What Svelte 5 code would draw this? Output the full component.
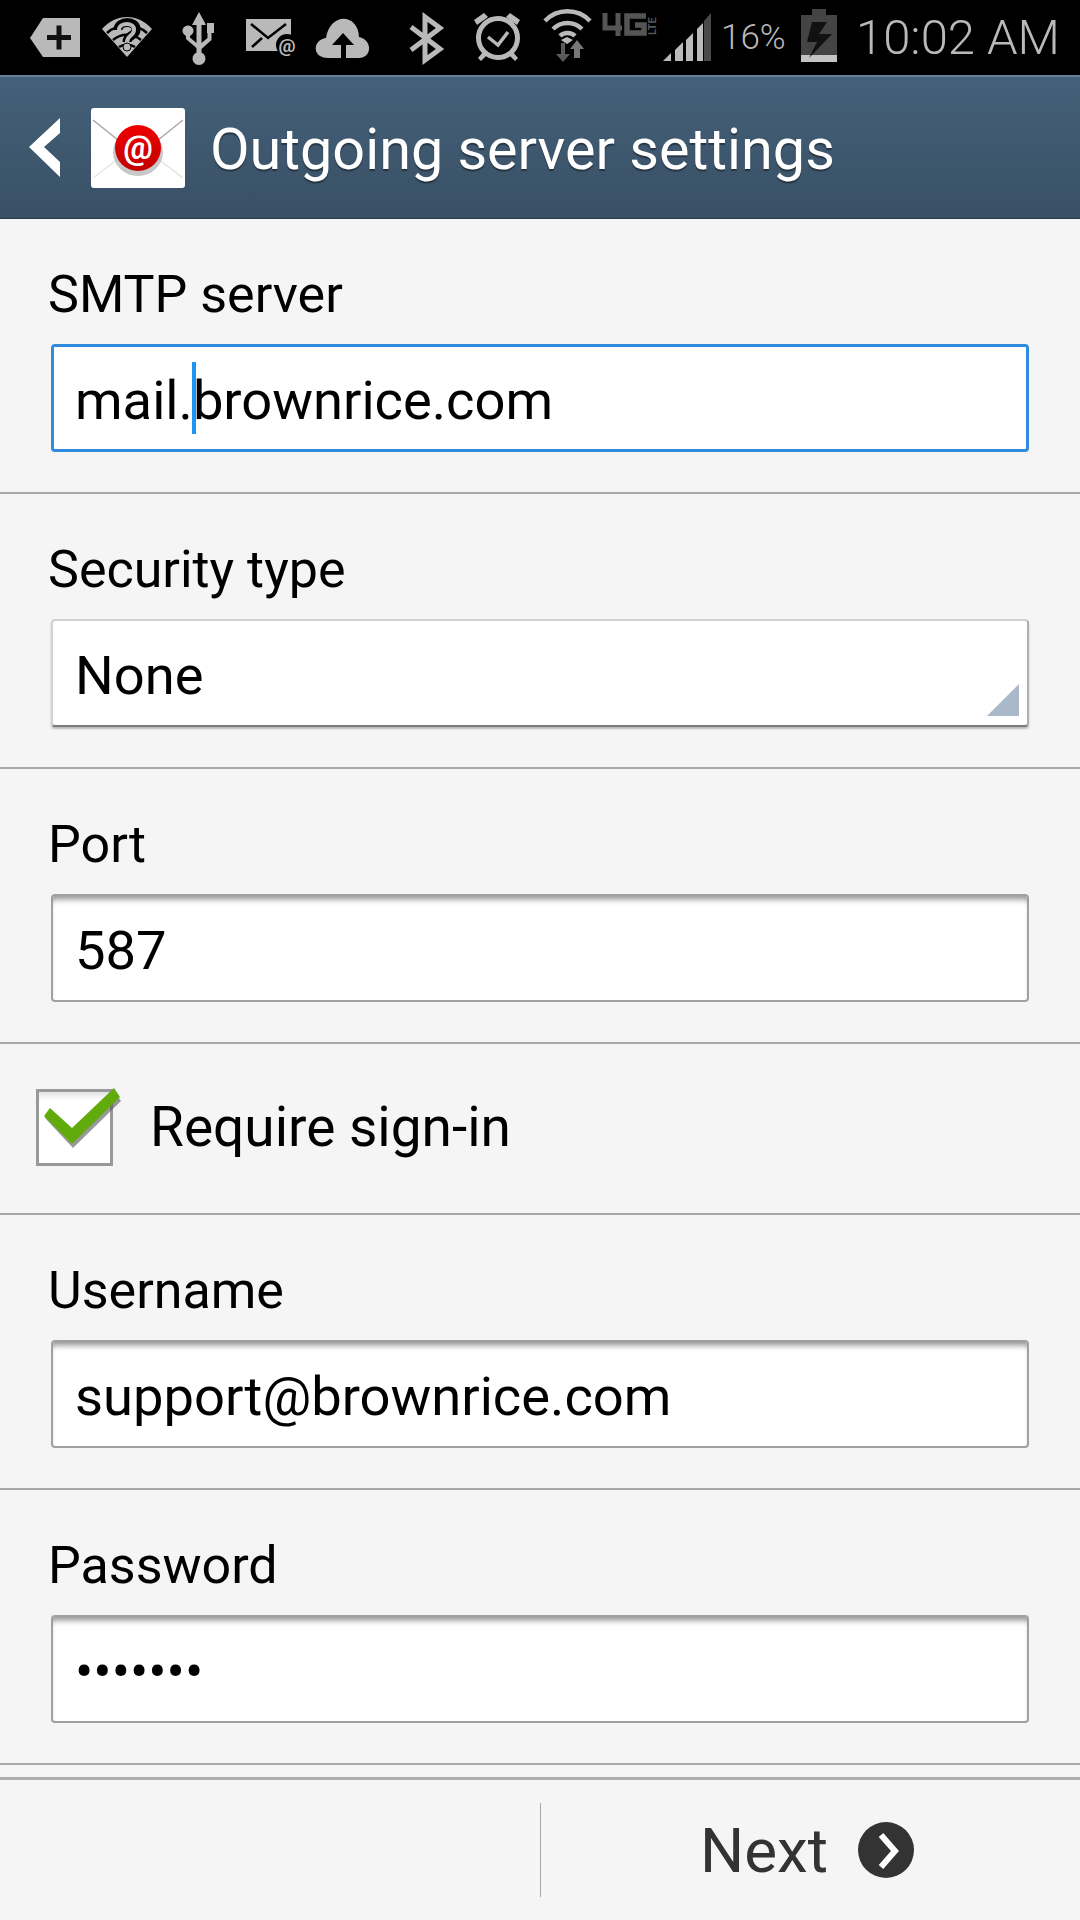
<script>
  const fields = [
    { label: 'SMTP server', value: 'mail.brownrice.com', kind: 'focus' },
    { label: 'Security type', value: 'None', kind: 'select' },
    { label: 'Port', value: '587', kind: 'plain' }
  ];
  const fields2 = [
    { label: 'Username', value: 'support@brownrice.com', kind: 'plain' },
    { label: 'Password', value: '•••••••', kind: 'pass' }
  ];
</script>

{#snippet field(f)}
  <section class="row">
    <div class="label">{f.label}</div>
    <div class="box {f.kind}">
      {#if f.kind === 'focus'}
        <span>mail.</span><i class="caret"></i><span>brownrice.com</span>
      {:else}
        <span>{f.value}</span>
      {/if}
      {#if f.kind === 'select'}
        <svg class="corner" width="32" height="32" viewBox="0 0 32 32"><polygon points="0,32 32,0 32,32" fill="#a9b9c9"/></svg>
      {/if}
    </div>
  </section>
{/snippet}

<div class="screen">
  <div class="status">
    <svg width="92" height="75" viewBox="0 0 92 75"><polygon points="30,38 43,18 80,18 80,57 43,57" fill="#b9b9b9"/><path d="M47 35h9.500v-9.500h5v9.500h9.500v5h-9.500v9.500h-5v-9.500h-9.500z" fill="#111"/></svg>
    <svg width="78" height="75" viewBox="92 0 78 75"><path d="M102 29C116 13 138 13 152 29L127 57Z" fill="#b9b9b9"/><path d="M107 33C118 23 136 23 147 33M113 40C121 33 133 33 141 40M119 47C123 44 131 44 135 47" stroke="#000" stroke-width="2.500" fill="none"/><path d="M118 30C118 20 137 20 136 30C136 36 127 35 127 42" stroke="#000" stroke-width="9" fill="none"/><path d="M119 30C119 22 135 22 134 30C134 36 127 35 127 42" stroke="#b9b9b9" stroke-width="4" fill="none"/><circle cx="127" cy="47" r="4" fill="#b9b9b9" stroke="#000"/></svg>
    <svg width="65" height="75" viewBox="170 0 65 75"><path d="M199 12L206 25H201.500V43L207.500 38V33H207V23H214V33H211.500V40L201.500 49V52.500A6.500 6.500 0 1 1 196.500 52.500V48L186 39V36A5.500 5.500 0 1 1 190 36V37.500L196.500 43V25H192Z" fill="#b9b9b9"/></svg>
    <svg width="75" height="75" viewBox="235 0 75 75"><rect x="246" y="19" width="45" height="32" fill="#b9b9b9"/><path d="M251 24L268 38L286 24M252 47L262 38" stroke="#000" stroke-width="2.500" fill="none"/><circle cx="287" cy="45" r="11" fill="#000"/><text x="287" y="52" text-anchor="middle" class="at">@</text></svg>
    <svg width="90" height="75" viewBox="310 0 90 75"><path d="M328 58C312 58 312 40 326 38C330 12 358 13 359 37C373 40 372 58 359 58Z" fill="#b9b9b9"/><path d="M343 33L354 45H346V58H341V45H332Z" fill="#000"/></svg>
    <svg width="65" height="75" viewBox="400 0 65 75"><path d="M411 27L440 49L425 60V17L440 28L411 50" stroke="#b9b9b9" stroke-width="5" fill="none"/></svg>
    <svg width="70" height="75" viewBox="465 0 70 75"><circle cx="498" cy="38" r="19.500" stroke="#b9b9b9" stroke-width="5" fill="none"/><path d="M474 20L484 13L488 17L477 25ZM520 20L510 13L506 17L517 25ZM483 52L487 55L481 61L478 58ZM513 52L509 55L515 61L518 58Z" fill="#b9b9b9"/><path d="M488 37L498 45L508 32" stroke="#b9b9b9" stroke-width="3.500" fill="none"/></svg>
    <svg width="62" height="75" viewBox="535 0 62 75"><path d="M545 21C557 8 578 8 590 21M553 29C561 21 574 21 582 29M560 36C564 32 571 32 575 36" stroke="#b9b9b9" stroke-width="4.500" fill="none"/><polygon points="567,37 573,40 567,44 561,40" fill="#b9b9b9"/><path d="M561 43H565V54H570L563 62L556 54H561Z" fill="#5a5a5a"/><path d="M577 40L584 49H580V58H574V49H570Z" fill="#777"/></svg>
    <svg width="63" height="75" viewBox="597 0 63 75"><path d="M605 13V28H622M618 13V36" stroke="#555" stroke-width="5" fill="none"/><path d="M646 16H627V33H644V25H635" stroke="#555" stroke-width="5.500" fill="none"/><text class="lte" transform="translate(656 35) rotate(-90)">LTE</text></svg>
    <svg width="55" height="75" viewBox="660 0 55 75"><polygon points="663,61 671,53 671,61" fill="#bbb"/><polygon points="675,61 675,50 683,42 683,61" fill="#bbb"/><polygon points="686,61 686,40 693,33 693,61" fill="#bbb"/><polygon points="697,61 697,29 703,23 703,61" fill="#bbb"/><polygon points="704,61 704,21 711,13 711,61" fill="#4a4a4a"/></svg>
    <span class="pct">16%</span>
    <svg class="batt" width="36" height="53" viewBox="0 0 36 53"><path d="M11 0H25V6H36V46H0V6H11Z" fill="#444"/><rect y="46" width="36" height="7" fill="#c4c4c4"/><polygon points="11,13 26,13 18,25 31,25 8,49 16,33 6,33" fill="#111"/></svg>
    <span class="time">10:02 AM</span>
  </div>

  <header class="bar">
    <svg class="back" width="31" height="60" viewBox="0 0 31 60"><polygon points="31,0 0,29 31,59 31,44 15,29 31,15" fill="#fff"/></svg>
    <svg class="mailicon" width="94" height="80" viewBox="0 0 94 80">
      <defs><linearGradient id="red" x1="0" y1="0" x2="0" y2="1"><stop offset="0" stop-color="#f00000"/><stop offset="1" stop-color="#c00000"/></linearGradient></defs>
      <rect width="94" height="80" rx="3" fill="#fff"/>
      <path d="M2 12L47 48L92 12" stroke="#a9a9a9" stroke-width="1.500" fill="none"/>
      <path d="M2 70L36 44M92 70L58 44" stroke="#e4e4e4" stroke-width="1.500" fill="none"/>
      <ellipse cx="47" cy="44" rx="25" ry="24" fill="#b0b0b0" opacity=".7"/>
      <circle cx="47" cy="40" r="23" fill="url(#red)"/>
      <text x="47" y="51" text-anchor="middle" class="at2">@</text>
    </svg>
    <h1>Outgoing server settings</h1>
  </header>

  <main>
    {#each fields as f}{@render field(f)}{/each}
    <section class="check">
      <div class="cb">
        <svg width="90" height="62" viewBox="0 0 90 62"><polygon points="2,30 8,22 30,43 72,4 78,13 30,60" fill="#555" opacity=".6"/><polygon points="1,28 7,20 29,40 71,0 77,9 29,56" fill="#62ab0c"/></svg>
      </div>
      <span>Require sign-in</span>
    </section>
    {#each fields2 as f}{@render field(f)}{/each}
  </main>

  <footer>
    <div class="fleft"></div>
    <div class="next">
      <span>Next</span>
      <svg width="56" height="56" viewBox="0 0 56 56"><circle cx="28" cy="28" r="28" fill="#333"/><path d="M23 13L37 29L23 45" stroke="#fff" stroke-width="6" fill="none"/></svg>
    </div>
  </footer>
</div>

<style>
  :global(body) { margin: 0; background: #f5f5f5; }
  .screen { width: 1080px; height: 1920px; display: flex; flex-direction: column; overflow: hidden; font-family: Roboto, sans-serif; background: #f5f5f5; color: #000; }

  .status { height: 75px; background: #000; display: flex; align-items: flex-start; flex: none; color: #b9b9b9; }
  .status svg { display: block; flex: none; }
  .at { font: 700 19px Roboto, sans-serif; fill: #b9b9b9; }
  .lte { font: 700 11px Roboto, sans-serif; fill: #555; }
  .pct { font-size: 35px; font-weight: 300; line-height: 75px; margin-left: 6px; width: 80px; flex: none; }
  .batt { margin-top: 9px; }
  .time { font-size: 49px; font-weight: 300; line-height: 75px; margin-left: 19px; white-space: nowrap; }

  .bar { height: 144px; flex: none; box-sizing: border-box; display: flex; align-items: center; background: linear-gradient(#44607a, #395064); border-top: 2px solid #67829a; border-bottom: 1px solid #2a3a48; }
  .back { margin-left: 29px; margin-top: 1px; }
  .mailicon { margin-left: 31px; margin-top: 1px; }
  .at2 { font: 700 33px Roboto, sans-serif; fill: #fff; }
  h1 { margin: 3px 0 0 25px; font-size: 57.500px; font-weight: 400; color: #fff; text-shadow: 0 2px 1px rgba(0,0,0,.4); white-space: nowrap; }

  main { flex: none; }
  .row { height: 275px; box-sizing: border-box; padding: 48px 51px 0; border-bottom: 2px solid #a8a8a8; }
  .label { font-size: 52px; line-height: 56px; height: 77px; margin-left: -3px; white-space: nowrap; }
  .box { position: relative; box-sizing: border-box; height: 108px; background: #fff; border: 2px solid #a0a0a0; border-radius: 4px; padding: 0 22px; font-size: 54.300px; white-space: nowrap; display: flex; align-items: center; box-shadow: inset 0 7px 6px -4px #8c8c8c; }
  .box span { position: relative; top: 2px; }
  .focus { border: 3px solid #2e8bdd; box-shadow: none; padding: 0 21px; }
  .select { border: 2px solid #d2d2d2; border-bottom-color: #7c7c7c; border-right-color: #b0b0b0; box-shadow: 0 2px 2px #bbb; }
  .caret { display: block; width: 4px; height: 72px; background: #1e96f0; margin: 0 -4px 0 0; position: relative; left: -1px; }
  .corner { position: absolute; right: 8px; bottom: 9px; }

  .check { height: 171px; box-sizing: border-box; display: flex; align-items: center; padding-left: 36px; border-bottom: 2px solid #a8a8a8; font-size: 55px; white-space: nowrap; }
  .cb { position: relative; width: 77px; height: 77px; box-sizing: border-box; border: 3px solid #999; background: linear-gradient(#e4e4e4, #fff 12%); flex: none; margin-top: -2px; }
  .cb svg { position: absolute; left: 4px; top: -4px; }
  .check span { margin-left: 37px; margin-top: -3px; }

  footer { margin-top: 12px; flex: 1; display: flex; border-top: 3px solid #aeaeae; }
  .fleft { width: 540px; margin: 23px 0; border-right: 1px solid #a8a8a8; flex: none; }
  .next { flex: 1; display: flex; align-items: center; padding-left: 159px; gap: 30px; color: #333; font-size: 62px; font-weight: 400; }
</style>
